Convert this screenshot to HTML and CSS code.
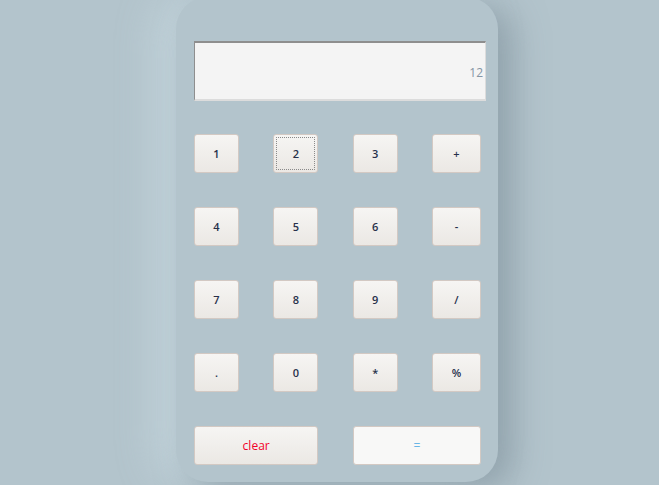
FILE: index.html
```html
<!DOCTYPE html>
<html>
<head>
<meta charset="utf-8">
<link rel="stylesheet" href="styles.css">
</head>
<body>
<div class="calc">
  <div class="display">12</div>
  <div class="keys">
    <button class="key">1</button>
    <button class="key focus">2</button>
    <button class="key">3</button>
    <button class="key">+</button>
    <button class="key">4</button>
    <button class="key">5</button>
    <button class="key">6</button>
    <button class="key">-</button>
    <button class="key">7</button>
    <button class="key">8</button>
    <button class="key">9</button>
    <button class="key">/</button>
    <button class="key">.</button>
    <button class="key">0</button>
    <button class="key">*</button>
    <button class="key">%</button>
    <button class="key wide clear">clear</button>
    <button class="key wide equals">=</button>
  </div>
</div>
</body>
</html>
```
FILE: styles.css
```css
html, body {
  margin: 0;
  padding: 0;
  background: #b3c4cc;
  overflow: hidden;
  height: 485px;
}
body {
  font-family: "Open Sans", "DejaVu Sans", sans-serif;
}
.calc {
  margin: -3px 0 0 176px;
  width: 322px;
  height: 485px;
  box-sizing: border-box;
  padding: 44px 12px 0 18px;
  background: #b3c4cc;
  border-radius: 32px;
  box-shadow: 14px 8px 34px rgba(112, 130, 140, 0.55), -18px 0 40px rgba(205, 222, 230, 0.7);
}
.display {
  height: 60px;
  box-sizing: border-box;
  background: #f4f4f4;
  border-top: 2px solid #8e8e8e;
  border-left: 1px solid #8e8e8e;
  border-right: 1px solid #dcdcdc;
  border-bottom: 2px solid #dcdcdc;
  display: flex;
  align-items: center;
  justify-content: flex-end;
  padding: 3px 2px 0 0;
  font-size: 12px;
  color: #8495a4;
}
.keys {
  margin-top: 33px;
  width: 287px;
  display: grid;
  grid-template-columns: 45px 45px 45px 49px;
  grid-auto-rows: 39px;
  justify-content: space-between;
  row-gap: 34px;
}
.key {
  margin: 0;
  padding: 0;
  font-family: "Open Sans", "DejaVu Sans", sans-serif;
  font-size: 11px;
  font-weight: 600;
  color: #27304a;
  background: linear-gradient(#f6f5f3, #ebe8e4);
  border: 1px solid #d3c9c3;
  border-radius: 3px;
  position: relative;
}
.focus::after {
  content: "";
  position: absolute;
  inset: 2px;
  border: 1px dotted #8a8a8a;
  border-radius: 1px;
}
.wide {
  grid-column: span 2;
}
.clear {
  color: #f2002a;
  font-weight: 400;
  font-size: 12px;
}
.equals {
  background: #f8f8f7;
  color: #6ab6e6;
  font-weight: 400;
  font-size: 12px;
}
```
